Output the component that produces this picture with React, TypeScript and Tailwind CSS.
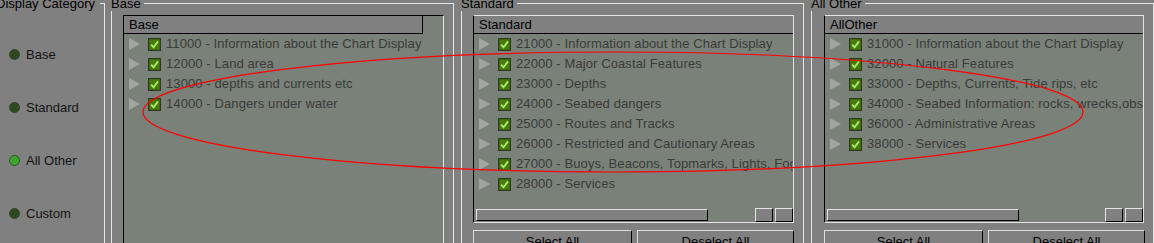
import React from "react";

const FONT = "font-['Liberation_Sans',Arial,sans-serif]";

function Arrow() {
  return (
    <svg width="12" height="12" viewBox="0 0 12 12" className="shrink-0">
      <polygon points="0,0 11,6 0,12" fill="#a3a5a2" />
    </svg>
  );
}

function Check() {
  return (
    <svg width="13" height="13" viewBox="0 0 13 13" className="shrink-0">
      <rect x="0.5" y="0.5" width="12" height="12" fill="#4a7a0e" stroke="#2c3822" />
      <rect x="1.5" y="1.5" width="10" height="10" fill="none" stroke="#3f6a0c" />
      <polyline points="3.2,6.6 5.6,9.4 10,3.4" fill="none" stroke="#a6ec68" strokeWidth="1.8" />
    </svg>
  );
}

function Row({ text }: { text: string }) {
  return (
    <div className="flex h-[20px] items-center whitespace-nowrap">
      <div className="ml-[5px]">
        <Arrow />
      </div>
      <div className="ml-[7px]">
        <Check />
      </div>
      <span className="ml-[5px] text-[13px] leading-[20px] tracking-[0.1px] text-[#393c38]">{text}</span>
    </div>
  );
}

function Label({ text, className }: { text: string; className?: string }) {
  return (
    <div
      className={`absolute top-[-8px] h-[15px] bg-[#808080] pr-[3px] text-[13px] leading-[15px] text-black whitespace-nowrap ${className ?? ""}`}
    >
      {text}
    </div>
  );
}

function Radio({ label, selected }: { label: string; selected?: boolean }) {
  return (
    <div className="flex h-[53px] items-center">
      <div
        className={
          selected
            ? "h-[11px] w-[11px] rounded-full border border-[#265a1a] bg-[#3ea22e]"
            : "h-[11px] w-[11px] rounded-full border border-[#33432a] bg-[#2d4a1f]"
        }
      />
      <span className="ml-[6px] text-[13px] leading-[15px] text-[#141414]">{label}</span>
    </div>
  );
}

function ScrollBar({ thumb }: { thumb: number }) {
  return (
    <div className="flex h-[14px] shrink-0 items-start">
      <div
        className="ml-[2px] mt-[1px] h-[12px] border-t border-l border-r border-b border-t-[#e4e4e4] border-l-[#e4e4e4] border-r-black border-b-black bg-[#808080]"
        style={{ width: thumb }}
      />
      <div className="flex-1" />
      <div className="flex gap-[2px]">
        <div className="h-[14px] w-[18px] border border-t-[#e4e4e4] border-l-[#e4e4e4] border-r-black border-b-black bg-[#808080]" />
        <div className="h-[14px] w-[18px] border border-t-[#e4e4e4] border-l-[#e4e4e4] border-r-black border-b-black bg-[#808080]" />
      </div>
    </div>
  );
}

function Button({ text, w }: { text: string; w: string }) {
  return (
    <div
      className={`flex h-[23px] items-center justify-center border border-t-[#dcdcdc] border-l-[#dcdcdc] border-r-black border-b-black bg-[#808080] text-[13px] text-black ${w}`}
    >
      {text}
    </div>
  );
}

function ListPanel({
  title,
  rows,
  thumb,
  padLeft,
  listW,
}: {
  title: string;
  rows: string[];
  thumb: number;
  padLeft: string;
  listW: string;
}) {
  return (
    <div className={`flex flex-col pt-[11px] ${padLeft}`}>
      <div
        className={`flex h-[208px] flex-col border border-l-black border-t-[#e4e4e4] border-r-[#e4e4e4] border-b-[#e4e4e4] bg-[#7a8179] ${listW}`}
      >
        <div className="h-[18px] shrink-0 border-b border-black bg-[#808080] pl-[5px] text-[13px] leading-[17px] text-black">
          {title}
        </div>
        <div className="flex-1 overflow-hidden">
          {rows.map((r) => (
            <Row key={r} text={r} />
          ))}
        </div>
        <ScrollBar thumb={thumb} />
      </div>
      <div className="mt-[7px] flex gap-[5px]">
        <Button text="Select All" w="w-[159px]" />
        <Button text="Deselect All" w="w-[157px]" />
      </div>
    </div>
  );
}

export default function App() {
  const base = [
    "11000 - Information about the Chart Display",
    "12000 - Land area",
    "13000 - depths and currents etc",
    "14000 - Dangers under water",
  ];
  const standard = [
    "21000 - Information about the Chart Display",
    "22000 - Major Coastal Features",
    "23000 - Depths",
    "24000 - Seabed dangers",
    "25000 - Routes and Tracks",
    "26000 - Restricted and Cautionary Areas",
    "27000 - Buoys, Beacons, Topmarks, Lights, Fog signals",
    "28000 - Services",
  ];
  const other = [
    "31000 - Information about the Chart Display",
    "32000 - Natural Features",
    "33000 - Depths, Currents, Tide rips, etc",
    "34000 - Seabed Information: rocks, wrecks,obstructions",
    "36000 - Administrative Areas",
    "38000 - Services",
  ];

  return (
    <div className={`relative flex h-[243px] w-[1154px] items-start overflow-hidden bg-[#808080] ${FONT}`}>
      {/* Display Category */}
      <div className="relative mt-[3px] h-[260px] w-[105px] shrink-0 border-t border-r border-[#e6e6e6]">
        <Label text="Display Category" className="left-[-4px] pr-[5px]" />
        <div className="pl-[9px] pt-[24px]">
          <Radio label="Base" />
          <Radio label="Standard" />
          <Radio label="All Other" selected />
          <Radio label="Custom" />
        </div>
      </div>

      {/* Base */}
      <div className="relative ml-[6px] mt-[3px] h-[260px] w-[343px] shrink-0 border-t border-l border-r border-[#e6e6e6]">
        <Label text="Base" className="left-[-1px]" />
        <div className="pl-[11px] pt-[11px]">
          <div className="h-[260px] w-[321px] border border-l-black border-t-black border-r-[#e4e4e4] border-b-[#e4e4e4] bg-[#7a8179]">
            <div className="h-[18px] w-[299px] border-r border-b border-black bg-[#808080] pl-[5px] text-[13px] leading-[17px] text-black">
              Base
            </div>
            {base.map((r) => (
              <Row key={r} text={r} />
            ))}
          </div>
        </div>
      </div>

      {/* Standard */}
      <div className="relative ml-[7px] mt-[3px] h-[260px] w-[343px] shrink-0 border-t border-l border-r border-[#e6e6e6]">
        <Label text="Standard" className="left-[-1px]" />
        <ListPanel title="Standard" rows={standard} thumb={232} padLeft="pl-[11px]" listW="w-[321px]" />
      </div>

      {/* All Other */}
      <div className="relative ml-[7px] mt-[3px] h-[260px] w-[343px] shrink-0 border-t border-l border-r border-[#e6e6e6]">
        <Label text="All Other" className="left-[-1px]" />
        <ListPanel title="AllOther" rows={other} thumb={192} padLeft="pl-[12px]" listW="w-[320px]" />
      </div>

      {/* red annotation ellipse */}
      <svg
        className="pointer-events-none absolute left-0 top-0"
        width="1154"
        height="243"
        viewBox="0 0 1154 243"
      >
        <ellipse cx="613" cy="112" rx="470" ry="60" fill="none" stroke="#ff0000" strokeWidth="1.2" />
      </svg>
    </div>
  );
}
